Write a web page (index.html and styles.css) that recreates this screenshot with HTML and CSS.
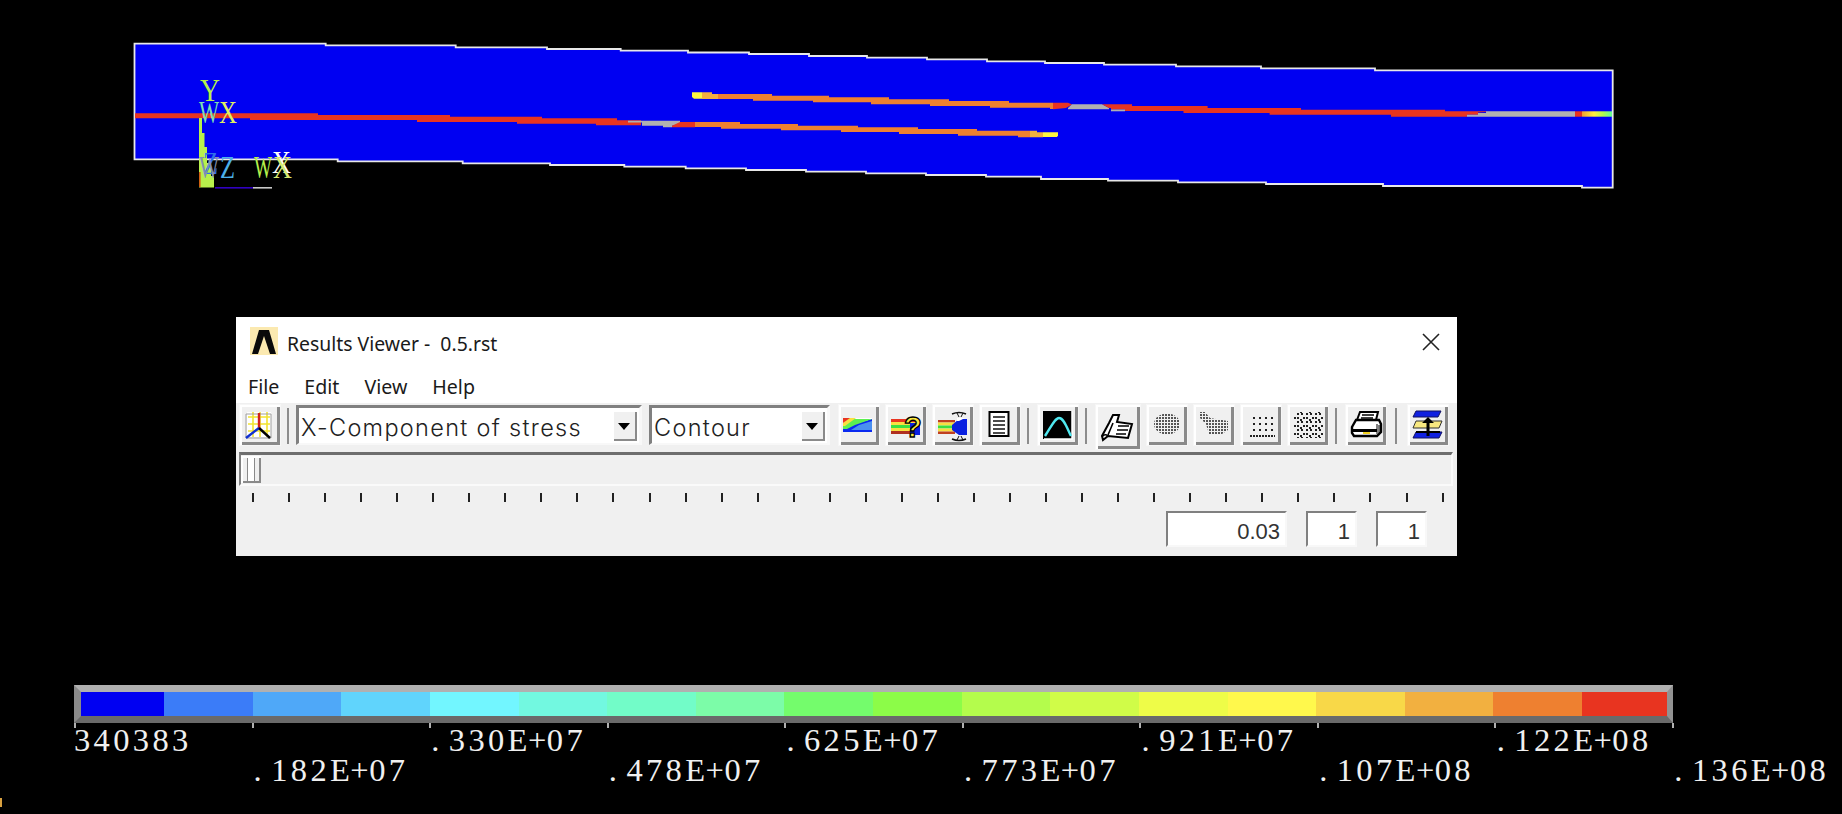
FILE: index.html
```html
<!DOCTYPE html>
<html lang="en">
<head>
<meta charset="utf-8">
<title>Results Viewer - 0.5.rst</title>
<link rel="stylesheet" href="styles.css">
</head>
<body>
<main class="screen">
  <svg class="model" viewBox="0 0 1842 317" aria-label="Stress contour plot">
    <defs>
      <linearGradient id="tip" x1="0" x2="1" y1="0" y2="0">
        <stop offset="0" stop-color="#f2a030"/><stop offset=".4" stop-color="#fff040"/><stop offset=".7" stop-color="#b0fc4c"/><stop offset="1" stop-color="#60fc98"/>
      </linearGradient>
    </defs>
    <path class="plate" d="M134.5 43.7H325.7V45.3H455.7V47.3H547V49H620.7V50.7H688V52.5H749V54H809V56H867V57.7H927V59.3H987V61.3H1045V63H1104V64.7H1176V66.3H1261V68.3H1375V70.3H1612.7V187.7H1582V186H1383V184H1266V182.3H1178V180.7H1108V179H1041V176.7H986V175H926V173.4H866V171.7H806V170H746V168.3H685.7V166.7H624.3V165H550V163.3H462.7V161.3H337.7V159.3H134.5Z"/>
    <g class="bands">
      <path fill="#e83420" d="M135 113.3H318V115H450V116.7H542V118.3H617V120.3H641V125.3H596V123.7H517V122H417V120H250V118.3H135Z"/>
      <path fill="#b0b0b0" d="M628 120.7H680V124L672 125.7V127.3H663V125.7H642V122.5H628Z"/>
      <path fill="#e83420" d="M680 122H695V127.3H672V125.7Z"/>
      <path fill="#ee8030" d="M695 122H740V124H798V125.7H858V127.3H918V129H977V130.7H1030V137.3H1018V135.7H958V134H899V132H841V130.3H781V128.7H721V127H695Z"/>
      <path fill="#f2b040" d="M1030 130.7H1037V132.3H1043V137.3H1030Z"/>
      <path fill="#fdf840" d="M1043 132.3H1058V135.5L1057 137H1043Z"/>
      <path fill="#fdf840" d="M692 92.3H702V98.7H694L692 97Z"/>
      <path fill="#f2b040" d="M702 92.3H712V94H718V99H702Z"/>
      <path fill="#ee8030" d="M718 94H772V95.7H829V97.3H889V99.3H949V101H1009V102.7H1053V109H1050V107.7H990V106H930V104.3H871V102.3H813V100.7H753V99H718Z"/>
      <path fill="#e83420" d="M1053 102.7H1068L1072 104.5L1066 108L1053 109.3Z"/>
      <path fill="#b0b0b0" d="M1072 104.3H1102L1109 108V109.3H1068V108Z"/>
      <path fill="#b0b0b0" d="M1111 109.3H1125V111.3H1111Z"/>
      <path fill="#e83420" d="M1102 104.3H1132V106H1207.6V108H1301V109.7H1445V111.3H1486V112L1478 112.5V114.7H1467V116.7H1391V114.7H1269.6V113H1183.5V111H1125V109.3H1111V108H1109Z"/>
      <path fill="#b0b0b0" d="M1486 111.3H1575V116.7H1467V114.7H1478V113H1486Z"/>
      <rect fill="#e83420" x="1575" y="111.3" width="7" height="5.4"/>
      <rect fill="url(#tip)" x="1582" y="111.3" width="30" height="5.4"/>
    </g>
    <g class="triad">
      <path fill="#b8f04c" d="M199 118H202V133H204.500V147H207V163H211V176H214V187.500H199Z"/>
      <rect fill="#d06010" x="199" y="172" width="1.6" height="15"/>
      <rect fill="#3000c0" x="215" y="187" width="38" height="1.6"/>
      <rect fill="#c8c8c8" x="253" y="187" width="19" height="1.6"/>
      <text class="axis" x="200" y="101" fill="#b4f04c" textLength="20" lengthAdjust="spacingAndGlyphs">Y</text>
      <text class="axis" x="199" y="123" fill="#7fe0b0" textLength="20" lengthAdjust="spacingAndGlyphs">W</text>
      <text class="axis" x="219" y="123" fill="#e0f060" textLength="18" lengthAdjust="spacingAndGlyphs">X</text>
      <text class="axis" x="203" y="174" fill="#3070e8" textLength="15" lengthAdjust="spacingAndGlyphs">Z</text>
      <text class="axis" x="199" y="178" fill="#8090b0" textLength="20" lengthAdjust="spacingAndGlyphs">W</text>
      <text class="axis" x="220" y="178" fill="#4cb0e8" textLength="15" lengthAdjust="spacingAndGlyphs">Z</text>
      <text class="axis" x="254" y="178" fill="#b4f04c" textLength="18" lengthAdjust="spacingAndGlyphs">W</text>
      <text class="axis" x="272" y="173" fill="#ffffff" textLength="19" lengthAdjust="spacingAndGlyphs">X</text>
      <text class="axis" x="273" y="178" fill="#d8e870" textLength="19" lengthAdjust="spacingAndGlyphs">X</text>
    </g>
  </svg>

  <section class="dialog">
    <header class="titlebar">
      <svg class="logo" viewBox="0 0 28 28"><rect width="28" height="28" fill="#fbe9b0"/><path fill="#0a0a0a" d="M9 3H19L26 27H20L14 9L8 27H2Z"/></svg>
      <span class="title">Results Viewer -&nbsp; 0.5.rst</span>
      <svg class="close" viewBox="0 0 18 18"><path d="M1 1L17 17M17 1L1 17"/></svg>
    </header>
    <nav class="menubar"><span>File</span><span>Edit</span><span>View</span><span>Help</span></nav>

    <div class="toolbar">
      <div class="btn"><svg viewBox="0 0 40 40"><rect x="7" y="7" width="24" height="25" fill="#fff"/><path stroke="#f2e430" stroke-width="1.600" fill="none" d="M8 12H30M8 19H30M8 26H30M13 7V32M20 7V32M27 7V32"/><path stroke="#a0a0a0" fill="none" d="M6 9H31V33H6Z"/><path stroke="#d02020" stroke-width="2.400" d="M19 8V23"/><path stroke="#1030d0" stroke-width="2.400" d="M19 23L6 33"/><path stroke="#000" stroke-width="2.400" d="M19 23L30 33"/></svg></div>
      <i class="sep"></i>
      <div class="combo wide"><span class="combo-text">X-Component of stress</span><b class="arrow"></b></div>
      <div class="combo narrow"><span class="combo-text">Contour</span><b class="arrow"></b></div>

      <div class="btn push"><svg viewBox="0 0 40 40"><rect x="4" y="13" width="29" height="14" fill="#fff"/><path fill="#0a2af0" d="M4 22L33 14V27H4Z"/><path fill="#4a90f0" d="M12 25L20 20L33 16V25Z"/><path fill="#5cf050" d="M4 19L14 14H33L16 20L8 24H4Z"/><path fill="#f8e040" d="M4 18L10 13H17L6 21H4Z"/><path fill="#e83420" d="M4 13H11L4 18Z"/></svg></div>
      <div class="btn"><svg viewBox="0 0 40 40"><rect x="5" y="14" width="27" height="3" fill="#e83420"/><rect x="5" y="17" width="27" height="3" fill="#f8e040"/><rect x="5" y="20" width="27" height="3" fill="#3ce040"/><rect x="5" y="23" width="27" height="3" fill="#f8e040"/><rect x="5" y="26" width="27" height="3" fill="#b03020"/><rect x="24" y="18" width="10" height="12" fill="#0a20e0"/><text class="qmark" x="18" y="32">?</text></svg></div>
      <div class="btn"><svg viewBox="0 0 40 40"><rect x="5" y="15" width="17" height="2.500" fill="#c04020"/><rect x="5" y="17.500" width="17" height="3" fill="#f8e040"/><rect x="5" y="20.500" width="17" height="3" fill="#3ce040"/><rect x="5" y="23.500" width="17" height="3" fill="#f8e040"/><rect x="5" y="26.500" width="17" height="2.500" fill="#c04020"/><path fill="#0a20e0" d="M19 20L26 14H34V30H26L19 25Z"/><path fill="#fff" d="M24 13H32L26 16H24Z"/><path fill="none" stroke="#111" stroke-width="1.600" d="M19 9Q26 6 33 9M19 34Q26 37 33 34"/><path fill="none" stroke="#111" d="M24 8L26 12M30 8L28 12M24 35L26 31M30 35L28 31"/></svg></div>
      <div class="btn"><svg viewBox="0 0 40 40"><rect x="9.500" y="7" width="19" height="24" fill="#fff" stroke="#000" stroke-width="2"/><path stroke="#111" stroke-width="1.500" d="M13 12H25M13 16H25M13 20H25M13 24H25M13 28H25"/></svg></div>
      <i class="sep"></i>
      <div class="btn push"><svg viewBox="0 0 40 40"><rect x="5" y="6" width="29" height="28" fill="#000"/><path stroke="#fff" stroke-width="1.500" fill="none" d="M6 34H34V6"/><path fill="none" stroke="#50e8f0" stroke-width="2.400" d="M7 31C13 22 17 13 21 13C26 13 29 23 33 31"/></svg></div>
      <i class="sep"></i>
      <div class="btn big push"><svg viewBox="0 0 44 44"><path fill="#fff" stroke="#000" stroke-width="2" d="M13 18L17 10H23L21 17L36 19L32 33L12 31L7 35L6 31Z"/><path fill="none" stroke="#000" stroke-width="1.600" d="M17 18L12 30M22 21H33M21 25H32M20 29H30"/><path fill="none" stroke="#000" stroke-width="1.400" d="M6 32Q9 28 12 31"/></svg></div>
      <div class="btn"><svg viewBox="0 0 40 40"><defs><pattern id="dense" width="3" height="3" patternUnits="userSpaceOnUse"><rect width="2" height="2" fill="#555"/></pattern></defs><ellipse cx="20" cy="19" rx="13" ry="10.500" fill="url(#dense)"/></svg></div>
      <div class="btn"><svg viewBox="0 0 40 40"><defs><pattern id="dense2" width="3" height="3" patternUnits="userSpaceOnUse"><rect width="2" height="2" fill="#555"/></pattern></defs><path fill="url(#dense2)" d="M5 7H11L16 13L34 16V25L28 29H15L12 19L5 12Z"/></svg></div>
      <div class="btn"><svg viewBox="0 0 40 40"><defs><pattern id="sparse" width="6" height="6" patternUnits="userSpaceOnUse"><rect width="2" height="2" fill="#222"/></pattern><pattern id="row" width="3" height="6" patternUnits="userSpaceOnUse"><rect width="2" height="2" fill="#222"/></pattern></defs><rect x="8" y="8" width="26" height="20" fill="url(#sparse)"/><rect x="8" y="30" width="26" height="2" fill="url(#row)"/></svg></div>
      <div class="btn"><svg viewBox="0 0 40 40"><defs><pattern id="grid" width="9" height="8" patternUnits="userSpaceOnUse"><path fill="#222" d="M0 0H2V2H0ZM4 0H6V2H4ZM0 4H2V6H0ZM6 4H8V6H6ZM3 6H5V8H3Z"/></pattern></defs><rect x="6" y="7" width="30" height="26" fill="url(#grid)"/></svg></div>
      <i class="sep"></i>
      <div class="btn push"><svg viewBox="0 0 40 40"><path fill="#fff" stroke="#000" stroke-width="2" d="M11 15L14 7H32L30 15Z"/><path stroke="#000" stroke-width="1.500" d="M16 10H28M15 13H27"/><path fill="#fff" stroke="#000" stroke-width="2.400" d="M6 22L10 15H33L35 19V27L31 31H8L6 28Z"/><path fill="#000" d="M6 24H31V27H6Z"/><rect x="17" y="27" width="7" height="2" fill="#f0d020"/><path stroke="#000" d="M33 20V28M31 19V29"/></svg></div>
      <i class="sep shift"></i>
      <div class="btn push2"><svg viewBox="0 0 40 40"><path fill="#1020e0" stroke="#101060" d="M8 6H33L30 12H5Z"/><path fill="#f8e880" stroke="#303030" d="M8 16H34L31 23H5Z"/><path fill="#1020e0" stroke="#101060" d="M8 27H34L31 33H5Z"/><path fill="#000" d="M14 18L20 12L26 18H21.500V31H18.500V18ZM8 26H32V28H8Z"/></svg></div>
    </div>

    <div class="track"><div class="thumb"></div></div>
    <div class="ticks"><i></i><i></i><i></i><i></i><i></i><i></i><i></i><i></i><i></i><i></i><i></i><i></i><i></i><i></i><i></i><i></i><i></i><i></i><i></i><i></i><i></i><i></i><i></i><i></i><i></i><i></i><i></i><i></i><i></i><i></i><i></i><i></i><i></i><i></i></div>
    <div class="fields"><span class="field time">0.03</span><span class="field step">1</span><span class="field step">1</span></div>
  </section>

  <section class="legend">
    <div class="scale">
      <i class="seg first c1"></i><i class="seg c2"></i><i class="seg c3"></i><i class="seg c4"></i><i class="seg c5"></i><i class="seg c6"></i><i class="seg c7"></i><i class="seg c8"></i><i class="seg c9"></i><i class="seg c10"></i><i class="seg c11"></i><i class="seg c12"></i><i class="seg c13"></i><i class="seg c14"></i><i class="seg c15"></i><i class="seg c16"></i><i class="seg c17"></i><i class="seg last c18"></i>
    </div>
    <div class="scale-ticks"><i></i><i></i><i></i><i></i><i></i><i></i><i></i><i></i><i></i><i></i></div>
    <div class="labels">
      <span>340383</span>
      <span><b>.</b>182<em>E+</em>07</span>
      <span><b>.</b>330<em>E+</em>07</span>
      <span><b>.</b>478<em>E+</em>07</span>
      <span><b>.</b>625<em>E+</em>07</span>
      <span><b>.</b>773<em>E+</em>07</span>
      <span><b>.</b>921<em>E+</em>07</span>
      <span><b>.</b>107<em>E+</em>08</span>
      <span><b>.</b>122<em>E+</em>08</span>
      <span><b>.</b>136<em>E+</em>08</span>
    </div>
  </section>
  <i class="stray"></i>
</main>
</body>
</html>
```

FILE: styles.css
```css
* { box-sizing: border-box; }
html, body { margin: 0; padding: 0; background: #000; }
.screen {
  position: relative;
  width: 1842px;
  height: 814px;
  overflow: hidden;
  background: #000;
  display: flex;
  flex-direction: column;
}
.model { display: block; width: 1842px; height: 317px; flex: none; }
.plate { fill: #0000f2; stroke: #e8e8e8; stroke-width: 1.8; }
.axis { font-family: "Liberation Serif", serif; font-size: 31px; }
.qmark {
  font-family: "Liberation Sans", sans-serif;
  font-size: 29px;
  font-weight: 700;
  fill: #f8e840;
  stroke: #000;
  stroke-width: 1.4px;
}

/* Dialog */
.dialog {
  width: 1221px;
  height: 239px;
  margin-left: 236px;
  flex: none;
  background: #f0f0f0;
  font-family: "Noto Sans", "Open Sans", sans-serif;
  color: #1a1a1a;
}
.titlebar {
  height: 48px;
  background: #fff;
  display: flex;
  align-items: center;
  padding-left: 14px;
  padding-right: 17px;
}
.logo { width: 28px; height: 28px; flex: none; }
.title { margin: 4px 0 0 9px; font-size: 19.4px; }
.close { width: 18px; height: 18px; margin: 1px 0 0 auto; fill: none; stroke: #222; stroke-width: 1.6; }
.menubar {
  height: 38px;
  background: #fff;
  display: flex;
  align-items: center;
  gap: 25px;
  padding: 4px 0 0 12px;
  font-size: 19.6px;
}
.toolbar {
  height: 49px;
  display: flex;
  gap: 7px;
  padding: 2px 0 0 4px;
  align-items: flex-start;
}
.btn {
  position: relative;
  width: 40px;
  height: 40px;
  flex: none;
  background: #f0f0f0;
  box-shadow: inset 2px 2px 0 #fff, inset -3px -3px 0 #8a8a8a, 0 0 0 1px #f6f6f6;
}
.btn svg { display: block; width: 100%; height: 100%; }
.btn.big { width: 44px; height: 44px; }
.push { margin-left: 2px; }
.push2 { margin-left: 4px; }
.sep { width: 2px; height: 36px; margin-top: 3px; flex: none; background: #8c8c8c; }
.sep.shift { margin-left: 2px; }
.combo {
  height: 40px;
  flex: none;
  background: #fff;
  border-style: solid;
  border-width: 3px 3px 2px 3px;
  border-color: #808080 #f8f8f8 #f8f8f8 #808080;
  display: flex;
  align-items: center;
  padding: 3px 0 0 2px;
  position: relative;
}
.combo.wide { width: 346px; }
.combo.narrow { width: 181px; }
.combo-text { font-family: "Inter", sans-serif; font-weight: 300; font-size: 23.5px; letter-spacing: 1.3px; color: #222; white-space: nowrap; }
.arrow {
  position: absolute;
  right: 2px;
  top: 3px;
  width: 24px;
  height: 30px;
  background: #f0f0f0;
  box-shadow: inset 1px 1px 0 #fff, inset -2px -2px 0 #8a8a8a;
}
.arrow::after {
  content: "";
  position: absolute;
  left: 5px;
  top: 12px;
  border-style: solid;
  border-width: 7px 6.5px 0;
  border-color: #000 transparent transparent;
}
.track {
  width: 1214px;
  height: 34px;
  margin-left: 3px;
  background: #f0f0f0;
  border-style: solid;
  border-width: 3px 2px 2px 2px;
  border-color: #6e6e6e #fafafa #fafafa #808080;
  padding-top: 1px;
}
.thumb {
  width: 20px;
  height: 27px;
  background: linear-gradient(90deg, #f0f0f0 0 6px, #8a8a8a 6px 7px, #fff 7px 13px, #8a8a8a 13px 14px, #f0f0f0 14px);
  box-shadow: inset 2px 2px 0 #fff, inset -2px -2px 0 #8a8a8a;
}
.ticks {
  width: 1192px;
  margin: 7px 0 0 16px;
  height: 9px;
  display: flex;
  justify-content: space-between;
}
.ticks i { width: 2px; height: 9px; background: #222; }
.fields {
  display: flex;
  justify-content: flex-end;
  gap: 19px;
  margin-top: 9px;
  padding-right: 30px;
}
.field {
  height: 36px;
  background: #fff;
  border-style: solid;
  border-width: 2px;
  border-color: #808080 #f8f8f8 #f8f8f8 #808080;
  font-family: "Liberation Sans", sans-serif;
  font-size: 22px;
  line-height: 37px;
  text-align: right;
  padding-right: 5px;
  color: #333;
}
.field.time { width: 121px; }
.field.step { width: 51px; }

/* Legend */
.legend { margin: 129px 0 0 74px; flex: none; }
.scale {
  width: 1599px;
  height: 38px;
  display: flex;
  border-style: solid;
  border-width: 7px 6px 7px 7px;
  border-color: #b0b0b0 #929292 #6a6a6a #8a8a8a;
}
.seg { flex: 1 1 0; }
.seg.first { flex: 0 0 83px; }
.seg.last { flex: 0 0 85px; }
.c1 { background: #0000f2; }
.c2 { background: #3b7cf8; }
.c3 { background: #4fa8f8; }
.c4 { background: #60d4fc; }
.c5 { background: #72f6ff; }
.c6 { background: #72f8e0; }
.c7 { background: #72fcc8; }
.c8 { background: #7cfca8; }
.c9 { background: #74fc6c; }
.c10 { background: #8cfc48; }
.c11 { background: #b4fc4c; }
.c12 { background: #d0fc48; }
.c13 { background: #eefc48; }
.c14 { background: #fff84c; }
.c15 { background: #f8d848; }
.c16 { background: #f2b040; }
.c17 { background: #ee8030; }
.c18 { background: #e83420; }
.scale-ticks {
  width: 1600px;
  height: 5px;
  display: flex;
  justify-content: space-between;
}
.scale-ticks i { width: 2px; height: 5px; background: #b0b0b0; }
.labels {
  display: grid;
  grid-template-columns: repeat(10, 177.6px);
  grid-template-rows: 30px 30px;
  margin-top: -3px;
  color: #f0f0f0;
  font-family: "Liberation Serif", serif;
  font-size: 32.5px;
  line-height: 30px;
  letter-spacing: 3.35px;
}
.labels span { grid-row: 1; white-space: nowrap; }
.labels span:nth-child(even) { grid-row: 2; }
.labels span:nth-child(2) { grid-column: 2; }
.labels span:nth-child(3) { grid-column: 3; }
.labels span:nth-child(4) { grid-column: 4; }
.labels span:nth-child(5) { grid-column: 5; }
.labels span:nth-child(6) { grid-column: 6; }
.labels span:nth-child(7) { grid-column: 7; }
.labels span:nth-child(8) { grid-column: 8; }
.labels span:nth-child(9) { grid-column: 9; }
.labels span:nth-child(10) { grid-column: 10; }
.labels b { display: inline-block; width: 19.6px; padding-left: 2px; font-weight: 400; text-align: left; letter-spacing: 0; }
.labels em { font-style: normal; letter-spacing: .5px; }
.stray { position: absolute; left: 0; top: 798px; width: 2px; height: 9px; background: #d8a040; }
```
